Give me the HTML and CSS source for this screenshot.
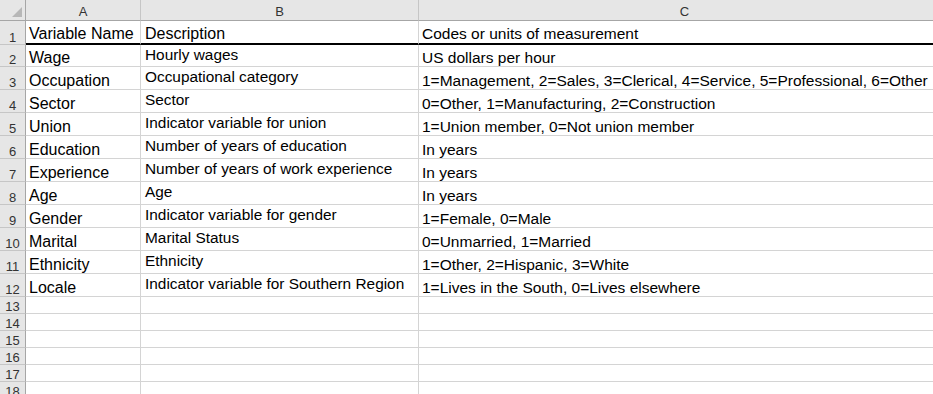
FILE: index.html
```html
<!DOCTYPE html>
<html lang="en">

<head>
    <meta charset="UTF-8">
    <meta name="viewport" content="width=device-width, initial-scale=1.0">
    <title>Variables</title>
    <link rel="stylesheet" href="styles.css">
</head>

<body>
    <table class="sheet">
        <colgroup>
            <col class="col-num">
            <col class="col-a">
            <col class="col-b">
            <col class="col-c">
        </colgroup>
        <thead>
            <tr class="col-heads">
                <th class="corner">
                    <svg width="25" height="20" viewBox="0 0 25 20">
                        <polygon points="12,17 22,17 22,7" fill="#b7b7b7" />
                    </svg>
                </th>
                <th>A</th>
                <th>B</th>
                <th>C</th>
            </tr>
        </thead>
        <tbody>
            <tr class="row-title">
                <th class="num">1</th>
                <td>Variable Name</td>
                <td>Description</td>
                <td class="code">Codes or units of measurement</td>
            </tr>
            <tr class="row-first">
                <th class="num">2</th>
                <td>Wage</td>
                <td class="desc">Hourly wages</td>
                <td class="code">US dollars per hour</td>
            </tr>
            <tr>
                <th class="num">3</th>
                <td>Occupation</td>
                <td class="desc">Occupational category</td>
                <td class="code">1=Management, 2=Sales, 3=Clerical, 4=Service, 5=Professional, 6=Other</td>
            </tr>
            <tr>
                <th class="num">4</th>
                <td>Sector</td>
                <td class="desc">Sector</td>
                <td class="code">0=Other, 1=Manufacturing, 2=Construction</td>
            </tr>
            <tr>
                <th class="num">5</th>
                <td>Union</td>
                <td class="desc">Indicator variable for union</td>
                <td class="code">1=Union member, 0=Not union member</td>
            </tr>
            <tr>
                <th class="num">6</th>
                <td>Education</td>
                <td class="desc">Number of years of education</td>
                <td class="code">In years</td>
            </tr>
            <tr>
                <th class="num">7</th>
                <td>Experience</td>
                <td class="desc">Number of years of work experience</td>
                <td class="code">In years</td>
            </tr>
            <tr>
                <th class="num">8</th>
                <td>Age</td>
                <td class="desc">Age</td>
                <td class="code">In years</td>
            </tr>
            <tr>
                <th class="num">9</th>
                <td>Gender</td>
                <td class="desc">Indicator variable for gender</td>
                <td class="code">1=Female, 0=Male</td>
            </tr>
            <tr>
                <th class="num">10</th>
                <td>Marital</td>
                <td class="desc">Marital Status</td>
                <td class="code">0=Unmarried, 1=Married</td>
            </tr>
            <tr>
                <th class="num">11</th>
                <td>Ethnicity</td>
                <td class="desc">Ethnicity</td>
                <td class="code">1=Other, 2=Hispanic, 3=White</td>
            </tr>
            <tr>
                <th class="num">12</th>
                <td>Locale</td>
                <td class="desc">Indicator variable for Southern Region</td>
                <td class="code">1=Lives in the South, 0=Lives elsewhere</td>
            </tr>
            <tr class="row-empty">
                <th class="num">13</th>
                <td></td>
                <td></td>
                <td></td>
            </tr>
            <tr class="row-empty">
                <th class="num">14</th>
                <td></td>
                <td></td>
                <td></td>
            </tr>
            <tr class="row-empty">
                <th class="num">15</th>
                <td></td>
                <td></td>
                <td></td>
            </tr>
            <tr class="row-empty">
                <th class="num">16</th>
                <td></td>
                <td></td>
                <td></td>
            </tr>
            <tr class="row-empty">
                <th class="num">17</th>
                <td></td>
                <td></td>
                <td></td>
            </tr>
            <tr class="row-empty">
                <th class="num">18</th>
                <td></td>
                <td></td>
                <td></td>
            </tr>
        </tbody>
    </table>
</body>

</html>
```

FILE: styles.css
```css
body {
    margin: 0;
    overflow: hidden;
    background-color: #fff;
    font-family: "Liberation Sans", Arial, sans-serif;
}

.sheet {
    width: 951px;
    table-layout: fixed;
    border-spacing: 0;
    border-collapse: separate;
}

.col-num {
    width: 26px;
}

.col-a {
    width: 115px;
}

.col-b {
    width: 278px;
}

.col-c {
    width: 532px;
}

.sheet th,
.sheet td {
    box-sizing: border-box;
    padding: 0;
    overflow: hidden;
    white-space: nowrap;
}

/* column letters */
.col-heads th {
    height: 21px;
    font-size: 13px;
    line-height: 15px;
    font-weight: normal;
    color: #333;
    text-align: center;
    vertical-align: bottom;
    padding-bottom: 1px;
    background-color: #e6e6e6;
    border-right: 1px solid #c6c6c6;
    border-bottom: 1px solid #a6a6a6;
}

.col-heads .corner {
    padding: 0;
    border-right: 1px solid #a6a6a6;
}

.corner svg {
    display: block;
}

/* row numbers */
.num {
    font-size: 13px;
    line-height: 13px;
    font-weight: normal;
    color: #333;
    text-align: center;
    vertical-align: bottom;
    background-color: #e6e6e6;
    border-right: 1px solid #a6a6a6;
    border-bottom: 1px solid #c6c6c6;
}

.sheet td {
    height: 23px;
    font-size: 16px;
    line-height: 16px;
    color: #000;
    padding-left: 3px;
    vertical-align: bottom;
    border-right: 1px solid #d4d4d4;
    border-bottom: 1px solid #d4d4d4;
}

.sheet td.code {
    font-size: 15.5px;
}

.sheet td.desc {
    font-size: 15.4px;
    line-height: 17px;
    padding-left: 4px;
    padding-top: 1px;
    vertical-align: top;
}

.row-title th {
    height: 24px;
}

.row-title td {
    height: 24px;
    padding-bottom: 1px;
    border-bottom: 2px solid #000;
}

.row-title td:nth-child(3) {
    padding-left: 4px;
}

.row-first th,
.row-first td {
    height: 22px;
}

.row-empty th,
.row-empty td {
    height: 17px;
}
```
